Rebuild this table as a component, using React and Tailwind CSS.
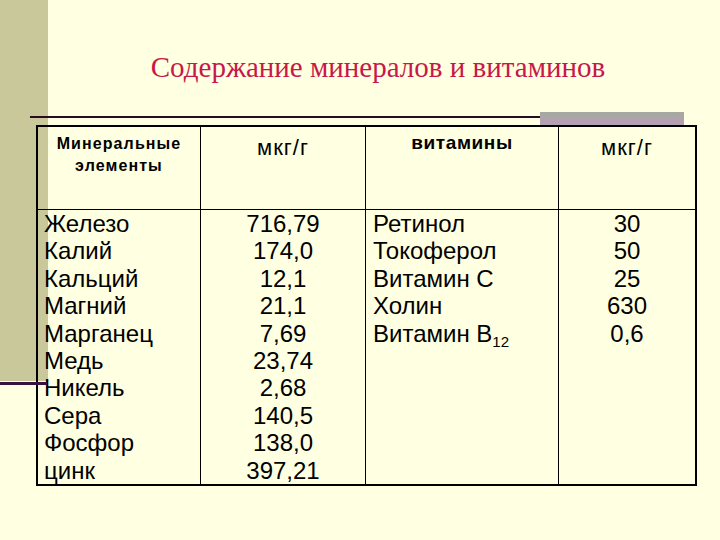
import React from "react";

const minerals = ["Железо", "Калий", "Кальций", "Магний", "Марганец", "Медь", "Никель", "Сера", "Фосфор", "цинк"];
const mineralValues = ["716,79", "174,0", "12,1", "21,1", "7,69", "23,74", "2,68", "140,5", "138,0", "397,21"];
const vitaminValues = ["30", "50", "25", "630", "0,6"];

export default function App() {
  return (
    <div className="relative w-[720px] h-[540px] overflow-hidden bg-[#ffffe1] font-['Liberation_Sans',Arial,sans-serif] text-black">
      <div className="absolute left-0 top-0 w-[48px] h-[381px] bg-[#c8c89b]" />
      <div className="absolute left-0 top-[382px] w-[47px] h-[3px] bg-[#3a1240] z-10" />

      <div className="relative">
        <h1 className="pt-[51px] pl-[36px] h-[112px] text-center font-['Liberation_Serif','Times_New_Roman',serif] text-[29px] leading-[32px] font-normal text-[#c8174a]">
          Содержание минералов и витаминов
        </h1>

        <div className="flex items-start h-[13px] pl-[30px]">
          <div className="mt-[4px] h-[2px] w-[510px] bg-[#2a0b22]" />
          <div className="flex flex-col w-[144px]">
            <div className="h-[5px] bg-[#a8a8a2]" />
            <div className="h-[8px] bg-[#b3a1b3]" />
          </div>
        </div>

        <div className="ml-[36px] w-[661px] border-2 border-black grid grid-cols-[162px_165px_193px_1fr]">
          <div className="h-[83px] border-b border-black pt-[6px] text-center text-[16px] leading-[22px] font-bold tracking-[1.1px]">
            Минеральные
            <br />
            элементы
          </div>
          <div className="h-[83px] border-b border-l border-black pt-[9px] text-center text-[22px] leading-[24px] tracking-[1px]">
            мкг/г
          </div>
          <div className="h-[83px] border-b border-l border-black pt-[6px] text-center text-[19px] leading-[20px] font-bold tracking-[0.6px]">
            витамины
          </div>
          <div className="h-[83px] border-b border-l border-black pt-[9px] text-center text-[22px] leading-[24px] tracking-[1px]">
            мкг/г
          </div>

          <div className="pl-[6px] text-[24px] leading-[27.4px]">
            {minerals.map((m) => (
              <div key={m}>{m}</div>
            ))}
          </div>
          <div className="border-l border-black text-center text-[24px] leading-[27.4px]">
            {mineralValues.map((v, i) => (
              <div key={i}>{v}</div>
            ))}
          </div>
          <div className="border-l border-black pl-[7px] text-[24px] leading-[27.4px]">
            <div>Ретинол</div>
            <div>Токоферол</div>
            <div>Витамин С</div>
            <div>Холин</div>
            <div>
              Витамин В<span className="relative top-[5px] text-[15px]">12</span>
            </div>
          </div>
          <div className="border-l border-black text-center text-[24px] leading-[27.4px]">
            {vitaminValues.map((v, i) => (
              <div key={i}>{v}</div>
            ))}
          </div>
        </div>
      </div>
    </div>
  );
}
